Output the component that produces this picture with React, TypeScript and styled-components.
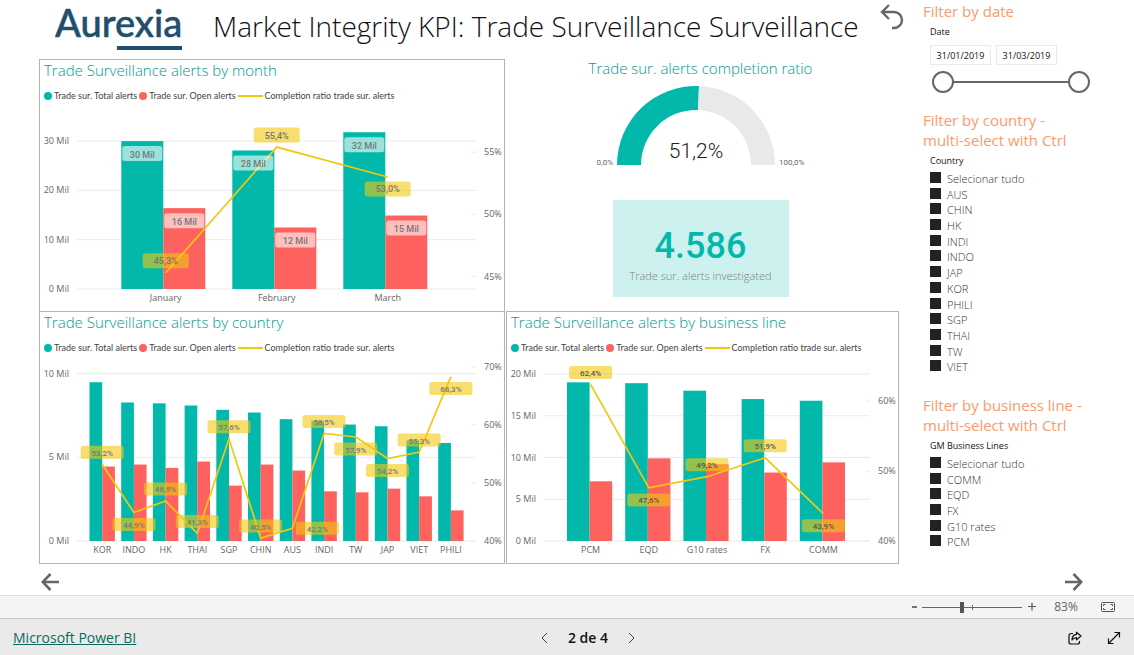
import React, { useState } from "react";
import styled, { createGlobalStyle } from "styled-components";

const TEAL = "#01b8aa";
const RED = "#fd625e";
const YELLOW = "#f2c80f";
const UI = '"Open Sans", "Noto Sans", sans-serif';
const DIN = 'Roboto, "Liberation Sans", sans-serif';

const GlobalStyle = createGlobalStyle`
  *, *::before, *::after { box-sizing: border-box; }
  body { margin: 0; background: #fff; font-family: ${UI}; color: #252423; }
  h1, h2, p, ul { margin: 0; padding: 0; font-weight: 400; }
  button { border: 0; padding: 0; background: none; color: inherit; font: inherit; cursor: pointer; display: flex; }
`;

const Page = styled.div`
  min-height: 100vh;
  display: flex;
  flex-direction: column;
`;

const Report = styled.div`
  flex: 1;
  display: flex;
`;

const Main = styled.main`
  flex: 1;
  min-width: 0;
  padding: 0 16px 0 39px;
`;

const Header = styled.header`
  height: 59px;
  display: flex;
  align-items: flex-start;
  padding-left: 16px;
`;

const Title = styled.h1`
  flex: 1;
  margin-left: 28px;
  font-size: 28px;
  font-weight: 300;
  line-height: 52px;
  white-space: nowrap;
  color: #111;
`;

const UndoButton = styled.button`
  margin: 3px -6px 0 0;
`;

const Board = styled.div`
  display: grid;
  grid-template-columns: minmax(0, 466fr) minmax(0, 393fr);
  column-gap: 1px;
`;

const Panel = styled.section<{ $joined?: boolean }>`
  border: 1px solid #b3b3b3;
  border-bottom-width: ${(p) => (p.$joined ? 0 : 1)}px;
`;

const PanelTitle = styled.h2`
  padding-left: 4px;
  font-size: 15px;
  font-weight: 300;
  line-height: 20px;
  white-space: nowrap;
  color: #009c8f;
`;

const Legend = styled.ul`
  display: flex;
  align-items: center;
  gap: 2px;
  height: 26px;
  padding: 6px 0 0 4px;
  list-style: none;
  font-family: Lato, ${UI};
  font-size: 9px;
  line-height: 12px;
  white-space: nowrap;
  color: #444;
`;

const LegendItem = styled.li`
  display: flex;
  align-items: center;
  gap: 2px;
`;

const Dot = styled.span<{ $color: string }>`
  width: 8px;
  height: 8px;
  border-radius: 50%;
  background: ${(p) => p.$color};
`;

const Dash = styled.span`
  width: 25px;
  height: 2px;
  background: ${YELLOW};
`;

const ChartSvg = styled.svg`
  display: block;
  width: 100%;
  height: auto;
`;

const AxisText = styled.text`
  font-family: ${UI};
  font-size: 9px;
  fill: #666;
`;

const ValueText = styled.text<{ $size: number; $dark?: boolean }>`
  font-family: ${DIN};
  font-size: ${(p) => p.$size}px;
  font-weight: 500;
  fill: ${(p) => (p.$dark ? "#555" : "#777")};
  text-anchor: middle;
`;

const Summary = styled.section`
  display: flex;
  flex-direction: column;
  align-items: center;
  padding-right: 4px;
`;

const SummaryTitle = styled.h2`
  font-size: 15px;
  font-weight: 300;
  line-height: 18px;
  white-space: nowrap;
  color: #009c8f;
`;

const GaugeSvg = styled.svg`
  margin-top: 2px;
`;

const GaugeText = styled.text<{ $big?: boolean }>`
  font-family: ${DIN};
  font-size: ${(p) => (p.$big ? 21 : 8)}px;
  font-weight: ${(p) => (p.$big ? 300 : 400)};
  fill: ${(p) => (p.$big ? "#222" : "#666")};
`;

const Card = styled.div`
  margin-top: 31px;
  width: 176px;
  height: 97px;
  padding-top: 26px;
  text-align: center;
  background: #ccf1ee;
`;

const CardValue = styled.p`
  font-family: ${DIN};
  font-size: 36px;
  font-weight: 500;
  line-height: 41px;
  color: ${TEAL};
`;

const CardLabel = styled.p`
  font-size: 11px;
  font-weight: 300;
  line-height: 18px;
  color: #808080;
`;

const Sidebar = styled.aside`
  width: 219px;
  padding: 1px 8px 0;
`;

const Filter = styled.section<{ $gap: number }>`
  margin-bottom: ${(p) => p.$gap}px;
`;

const FilterTitle = styled.h2`
  font-size: 15px;
  line-height: 20px;
  color: #fd9a6c;
`;

const FilterLabel = styled.p`
  padding: 1px 0 0 7px;
  font-size: 9px;
  line-height: 20px;
  color: #111;
`;

const DateRow = styled.div`
  display: flex;
  gap: 5px;
  padding: 3px 0 0 7px;
`;

const DateInput = styled.input`
  width: 61px;
  height: 20px;
  padding: 0 4px;
  border: 1px solid #eaeaea;
  font-family: ${UI};
  font-size: 9px;
  text-align: center;
  color: #111;
`;

const RangeTrack = styled.div`
  position: relative;
  width: 158px;
  height: 22px;
  margin: 6px 0 0 9px;
  background: linear-gradient(#666, #666) center / 136px 2px no-repeat;
`;

const RangeInput = styled.input`
  position: absolute;
  inset: 0;
  width: 100%;
  height: 22px;
  margin: 0;
  appearance: none;
  background: transparent;
  pointer-events: none;
  &::-webkit-slider-thumb {
    appearance: none;
    width: 22px;
    height: 22px;
    border: 2px solid #666;
    border-radius: 50%;
    background: #fff;
    pointer-events: auto;
  }
`;

const OptionList = styled.ul<{ $height: number }>`
  display: grid;
  grid-auto-rows: 1fr;
  height: ${(p) => p.$height}px;
  padding-left: 7px;
  list-style: none;
`;

const Option = styled.label`
  display: flex;
  align-items: center;
  gap: 6px;
  font-size: 11px;
  font-weight: 300;
  line-height: 15px;
  color: #333;
`;

const Tick = styled.input`
  appearance: none;
  width: 11px;
  height: 11px;
  margin: 0 0 2px;
  border: 1px solid #222;
  &:checked { background: #222; }
`;

const PageNav = styled.nav`
  display: flex;
  justify-content: space-between;
  align-items: center;
  height: 31px;
  padding: 5px 51px 0 41px;
`;

const ZoomBar = styled.div`
  display: flex;
  align-items: center;
  justify-content: flex-end;
  height: 23px;
  padding-right: 19px;
  border-top: 1px solid #dcdcdc;
  background: #f4f4f4;
  color: #666;
`;

const ZoomInput = styled.input`
  width: 100px;
  height: 12px;
  margin: 0 5px 0 4px;
  appearance: none;
  background:
    linear-gradient(#666, #666) 50px 50% / 1px 5px no-repeat,
    linear-gradient(#666, #666) center / 100% 1px no-repeat;
  &::-webkit-slider-thumb {
    appearance: none;
    width: 4px;
    height: 11px;
    background: #555;
  }
`;

const ZoomValue = styled.output`
  width: 60px;
  margin-right: 5px;
  text-align: center;
  font-size: 12px;
  line-height: 16px;
`;

const Footer = styled.footer`
  display: grid;
  grid-template-columns: 1fr auto 1fr;
  align-items: center;
  height: 37px;
  padding: 2px 13px 0;
  border-top: 1px solid #c6c6c6;
  background: #eaeaea;
`;

const BrandLink = styled.a`
  justify-self: start;
  font-size: 14px;
  line-height: 20px;
  color: #0b6a5d;
`;

const Pager = styled.div`
  display: flex;
  align-items: center;
  gap: 20px;
  padding-left: 42px;
`;

const PageCount = styled.span`
  font-size: 14px;
  font-weight: 600;
  line-height: 20px;
  color: #111;
`;

const Actions = styled.div`
  justify-self: end;
  display: flex;
  gap: 25px;
`;

type Bar = { name: string; total: number; open: number; ratio: number; label: string; dx: number; dy: number };

type ChartSpec = {
  width: number;
  gridEnd: number;
  firstBar: number;
  pitch: number;
  barWidth: number;
  pointShift: number;
  perMil: number;
  left: number[];
  right: number[];
  rightBase: number;
  perPercent: number;
  pill: [number, number];
  textSize: number;
  barLabels?: boolean;
  darkLabels?: boolean;
  bars: Bar[];
};

const BASE = 183;

function ComboChart({ spec, title }: { spec: ChartSpec; title: string }) {
  const ratioY = (v: number) => BASE - (v - spec.rightBase) * spec.perPercent;
  const milY = (v: number) => BASE - v * spec.perMil;
  const mid = (i: number) => spec.firstBar + i * spec.pitch + spec.barWidth;
  const point = (i: number) => mid(i) + spec.pointShift;
  const [pw, ph] = spec.pill;
  return (
    <ChartSvg viewBox={`0 0 ${spec.width} 205`} role="img" aria-label={title}>
      {spec.left.map((v) => (
        <g key={v}>
          <line x1="37" x2={spec.gridEnd} y1={milY(v)} y2={milY(v)} stroke="#eaeaea" />
          <AxisText x="29" y={milY(v) + 3} textAnchor="end">{v} Mil</AxisText>
        </g>
      ))}
      {spec.right.map((v) => (
        <g key={v}>
          <line x1={spec.gridEnd - 5} x2={spec.gridEnd} y1={ratioY(v)} y2={ratioY(v)} stroke="#eaeaea" />
          <AxisText x={spec.gridEnd + 8} y={ratioY(v) + 3}>{v}%</AxisText>
        </g>
      ))}
      {spec.bars.map((b, i) => (
        <g key={b.name}>
          <rect x={mid(i) - spec.barWidth} y={milY(b.total)} width={spec.barWidth} height={b.total * spec.perMil} fill={TEAL} />
          <rect x={mid(i)} y={milY(b.open)} width={spec.barWidth} height={b.open * spec.perMil} fill={RED} />
          <AxisText x={point(i)} y="195" textAnchor="middle">{b.name}</AxisText>
        </g>
      ))}
      <polyline
        points={spec.bars.map((b, i) => `${point(i)},${ratioY(b.ratio)}`).join(" ")}
        fill="none"
        stroke={YELLOW}
        strokeWidth="1.7"
      />
      {spec.barLabels &&
        spec.bars.flatMap((b, i) =>
          [b.total, b.open].map((v, k) => {
            const cx = mid(i) + (k - 0.5) * spec.barWidth;
            const cy = milY(v) + 12.5;
            return (
              <g key={`${b.name}${k}`}>
                <rect x={cx - 20} y={cy - 7.5} width="40" height="15" rx="2.5" fill="#fff" fillOpacity="0.6" />
                <ValueText $size={spec.textSize} x={cx} y={cy + 4}>{Math.round(v)} Mil</ValueText>
              </g>
            );
          })
        )}
      {spec.bars.map((b, i) => {
        const cx = point(i) + b.dx;
        const cy = ratioY(b.ratio) + b.dy;
        return (
          <g key={b.name}>
            <rect x={cx - pw / 2} y={cy - ph / 2} width={pw} height={ph} rx="2.5" fill={YELLOW} fillOpacity="0.6" />
            <ValueText $size={spec.textSize} $dark={spec.darkLabels} x={cx} y={cy + 3.5}>{b.label}</ValueText>
          </g>
        );
      })}
    </ChartSvg>
  );
}

const bar = (name: string, total: number, open: number, ratio: number, dy: number, dx = 0): Bar => ({
  name, total, open, ratio, dy, dx, label: `${ratio.toFixed(1).replace(".", ",")}%`,
});

const byMonth: ChartSpec = {
  width: 464, gridEnd: 436, firstBar: 81.3, pitch: 111, barWidth: 42, pointShift: 2.4, perMil: 4.93,
  left: [0, 10, 20, 30], right: [45, 50, 55], rightBase: 44, perPercent: 12.45,
  pill: [46, 15], textSize: 9, barLabels: true,
  bars: [
    bar("January", 30, 16.4, 45.3, -12),
    bar("February", 28.1, 12.48, 55.4, -12),
    bar("March", 31.8, 14.9, 53, 12),
  ],
};

const byCountry: ChartSpec = {
  width: 464, gridEnd: 436, firstBar: 49.5, pitch: 31.7, barWidth: 12.7, pointShift: 0, perMil: 16.73,
  left: [0, 5, 10], right: [40, 50, 60, 70], rightBase: 40, perPercent: 5.81,
  pill: [43, 13], textSize: 8,
  bars: [
    bar("KOR", 9.49, 4.45, 53.2, -12),
    bar("INDO", 8.28, 4.57, 44.9, 12),
    bar("HK", 8.23, 4.37, 46.9, -12),
    bar("THAI", 8.1, 4.75, 41.3, -12),
    bar("SGP", 7.84, 3.31, 57.6, -12),
    bar("CHIN", 7.68, 4.57, 40.5, -12),
    bar("AUS", 7.28, 4.21, 42.2, 0, 25),
    bar("INDI", 7.18, 2.97, 58.5, -12),
    bar("TW", 6.96, 2.91, 57.9, 12),
    bar("JAP", 6.86, 3.13, 54.2, 12),
    bar("VIET", 6.02, 2.67, 55.3, -12),
    bar("PHILI", 5.86, 1.83, 68.3, 12),
  ],
};

const byLine: ChartSpec = {
  width: 391, gridEnd: 363, firstBar: 60, pitch: 58.2, barWidth: 22.6, pointShift: 1, perMil: 8.35,
  left: [0, 5, 10, 15, 20], right: [40, 50, 60], rightBase: 40, perPercent: 6.99,
  pill: [43, 13], textSize: 8, darkLabels: true,
  bars: [
    bar("PCM", 19, 7.15, 62.4, -12),
    bar("EQD", 18.9, 9.9, 47.6, 12),
    bar("G10 rates", 18, 9.2, 49.2, -12),
    bar("FX", 17, 8.2, 51.9, -12),
    bar("COMM", 16.8, 9.42, 43.9, 12),
  ],
};

function ChartPanel({ title, spec, joined }: { title: string; spec: ChartSpec; joined?: boolean }) {
  return (
    <Panel $joined={joined}>
      <PanelTitle>{title}</PanelTitle>
      <Legend>
        <LegendItem><Dot $color={TEAL} />Trade sur. Total alerts</LegendItem>
        <LegendItem><Dot $color={RED} />Trade sur. Open alerts</LegendItem>
        <LegendItem><Dash />Completion ratio trade sur. alerts</LegendItem>
      </Legend>
      <ComboChart spec={spec} title={title} />
    </Panel>
  );
}

function Gauge() {
  const cx = 99, cy = 86, ro = 79, ri = 55;
  const angle = Math.PI * (1 - 0.512);
  const arc = (a0: number, a1: number) => {
    const p = (r: number, a: number) => `${cx + r * Math.cos(a)} ${cy - r * Math.sin(a)}`;
    return `M${p(ro, a0)}A${ro} ${ro} 0 0 1 ${p(ro, a1)}L${p(ri, a1)}A${ri} ${ri} 0 0 0 ${p(ri, a0)}Z`;
  };
  return (
    <GaugeSvg width="208" height="90" viewBox="0 0 208 90" role="img" aria-label="Completion ratio">
      <path d={arc(Math.PI, angle)} fill={TEAL} />
      <path d={arc(angle, 0)} fill="#e9e9e9" />
      <GaugeText $big x={cx} y="79" textAnchor="middle">51,2%</GaugeText>
      <GaugeText x="16" y="86" textAnchor="end">0,0%</GaugeText>
      <GaugeText x="182" y="86">100,0%</GaugeText>
    </GaugeSvg>
  );
}

function Options({ items, height }: { items: string[]; height: number }) {
  return (
    <OptionList $height={height}>
      {items.map((item) => (
        <li key={item}>
          <Option><Tick type="checkbox" defaultChecked />{item}</Option>
        </li>
      ))}
    </OptionList>
  );
}

const countries = ["Selecionar tudo", "AUS", "CHIN", "HK", "INDI", "INDO", "JAP", "KOR", "PHILI", "SGP", "THAI", "TW", "VIET"];
const lines = ["Selecionar tudo", "COMM", "EQD", "FX", "G10 rates", "PCM"];

export default function App() {
  const [zoom, setZoom] = useState(83);
  return (
    <Page>
      <GlobalStyle />
      <Report>
        <Main>
          <Header>
            <svg width="130" height="54" viewBox="0 0 130 54" role="img" aria-label="Aurexia">
              <text x="0" y="37" fontFamily="Lato, sans-serif" fontWeight="500" fontSize="38" fill="#1f4e6e" stroke="#1f4e6e" strokeWidth="0.5">Aurexia</text>
              <rect x="62" y="46" width="65" height="4" fill="#1f4e6e" />
            </svg>
            <Title>Market Integrity KPI: Trade Surveillance Surveillance</Title>
            <UndoButton aria-label="Back">
              <svg width="26" height="28" viewBox="0 0 26 28" fill="none" stroke="#666" strokeWidth="2.4">
                <path d="M10 2 3 9l7 7M3 9h12a7.8 7.8 0 0 1 0 16h-2" />
              </svg>
            </UndoButton>
          </Header>
          <Board>
            <ChartPanel joined title="Trade Surveillance alerts by month" spec={byMonth} />
            <Summary>
              <SummaryTitle>Trade sur. alerts completion ratio</SummaryTitle>
              <Gauge />
              <Card>
                <CardValue>4.586</CardValue>
                <CardLabel>Trade sur. alerts investigated</CardLabel>
              </Card>
            </Summary>
            <ChartPanel title="Trade Surveillance alerts by country" spec={byCountry} />
            <ChartPanel title="Trade Surveillance alerts by business line" spec={byLine} />
          </Board>
        </Main>
        <Sidebar>
          <Filter $gap={17}>
            <FilterTitle>Filter by date</FilterTitle>
            <FilterLabel>Date</FilterLabel>
            <DateRow>
              <DateInput aria-label="Start date" defaultValue="31/01/2019" />
              <DateInput aria-label="End date" defaultValue="31/03/2019" />
            </DateRow>
            <RangeTrack>
              <RangeInput type="range" aria-label="Range start" min={0} max={59} defaultValue={0} />
              <RangeInput type="range" aria-label="Range end" min={0} max={59} defaultValue={59} />
            </RangeTrack>
          </Filter>
          <Filter $gap={20}>
            <FilterTitle>Filter by country -<br />multi-select with Ctrl</FilterTitle>
            <FilterLabel>Country</FilterLabel>
            <Options items={countries} height={204} />
          </Filter>
          <Filter $gap={0}>
            <FilterTitle>Filter by business line -<br />multi-select with Ctrl</FilterTitle>
            <FilterLabel>GM Business Lines</FilterLabel>
            <Options items={lines} height={94} />
          </Filter>
        </Sidebar>
      </Report>
      <PageNav>
        <button aria-label="Previous report page">
          <svg width="18" height="18" viewBox="0 0 18 18" fill="none" stroke="#666" strokeWidth="2.6">
            <path d="M9.5 1 1.7 9l7.8 8M2 9h16" />
          </svg>
        </button>
        <button aria-label="Next report page">
          <svg width="18" height="18" viewBox="0 0 18 18" fill="none" stroke="#666" strokeWidth="2.6">
            <path d="M8.5 1l7.8 8-7.8 8M16 9H0" />
          </svg>
        </button>
      </PageNav>
      <ZoomBar>
        <button aria-label="Zoom out" onClick={() => setZoom(zoom - 1)}>
          <svg width="8" height="12" viewBox="0 0 8 12"><path d="M2 6h5" stroke="#555" strokeWidth="1.6" /></svg>
        </button>
        <ZoomInput type="range" aria-label="Zoom" min={43} max={143} value={zoom} onChange={(e) => setZoom(+e.target.value)} />
        <button aria-label="Zoom in" onClick={() => setZoom(zoom + 1)}>
          <svg width="9" height="12" viewBox="0 0 9 12"><path d="M1 5.5h8M5 1.5v8" stroke="#555" strokeWidth="1.2" /></svg>
        </button>
        <ZoomValue>{zoom}%</ZoomValue>
        <button aria-label="Fit to page">
          <svg width="14" height="10" viewBox="0 0 14 10" fill="none" stroke="#555">
            <rect x="0.5" y="0.5" width="13" height="9" rx="1" />
            <path d="M2.5 4V2.5h2M9.5 2.5h2V4M2.5 6v1.5h2M9.5 7.5h2V6" />
          </svg>
        </button>
      </ZoomBar>
      <Footer>
        <BrandLink href="#powerbi">Microsoft Power BI</BrandLink>
        <Pager>
          <button aria-label="Previous page">
            <svg width="7" height="12" viewBox="0 0 7 12" fill="none" stroke="#444"><path d="M6 1 1 6l5 5" /></svg>
          </button>
          <PageCount>2 de 4</PageCount>
          <button aria-label="Next page">
            <svg width="7" height="12" viewBox="0 0 7 12" fill="none" stroke="#444"><path d="m1 1 5 5-5 5" /></svg>
          </button>
        </Pager>
        <Actions>
          <button aria-label="Share">
            <svg width="14" height="14" viewBox="0 0 14 14" fill="none" stroke="#111" strokeWidth="1.2" strokeLinejoin="round">
              <path d="M5 2.5H3a2 2 0 0 0-2 2V11a2 2 0 0 0 2 2h6.5a2 2 0 0 0 2-2v-1" />
              <path d="M8.5 1.2 13 5 8.5 8.8V6.7C6.5 6.7 5 7.5 4 9c0-3 1.5-5.3 4.5-5.6Z" />
            </svg>
          </button>
          <button aria-label="Full screen">
            <svg width="14" height="14" viewBox="0 0 14 14" fill="none" stroke="#111" strokeWidth="1.2">
              <path d="M1.5 12.5l11-11M7.5 1.5h5v5M1.5 7.5v5h5" />
            </svg>
          </button>
        </Actions>
      </Footer>
    </Page>
  );
}
